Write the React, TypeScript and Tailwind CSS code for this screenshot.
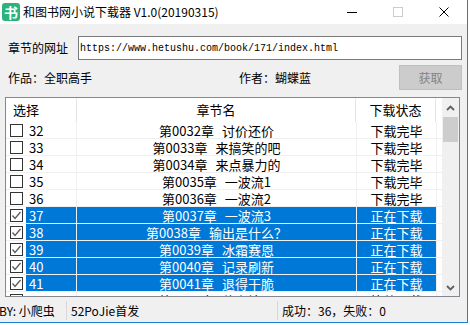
import React from 'react';

interface Chapter {
  no: number;
  title: string;
  status: string;
  checked: boolean;
}

const CHAPTERS: Chapter[] = [
  { no: 32, title: '第0032章 讨价还价', status: '下载完毕', checked: false },
  { no: 33, title: '第0033章 来搞笑的吧', status: '下载完毕', checked: false },
  { no: 34, title: '第0034章 来点暴力的', status: '下载完毕', checked: false },
  { no: 35, title: '第0035章 一波流1', status: '下载完毕', checked: false },
  { no: 36, title: '第0036章 一波流2', status: '下载完毕', checked: false },
  { no: 37, title: '第0037章 一波流3', status: '正在下载', checked: true },
  { no: 38, title: '第0038章 输出是什么？', status: '正在下载', checked: true },
  { no: 39, title: '第0039章 冰霜赛恩', status: '正在下载', checked: true },
  { no: 40, title: '第0040章 记录刷新', status: '正在下载', checked: true },
  { no: 41, title: '第0041章 退得干脆', status: '正在下载', checked: true },
  { no: 42, title: '第0042章 什么情况', status: '等待下载', checked: false },
];

const CJK = 'font-["Noto_Sans_CJK_SC",sans-serif]';

const CheckBox: React.FC<{ checked: boolean }> = ({ checked }) => (
  <div className="flex h-[13px] w-[13px] items-center justify-center border border-[#333333] bg-white">
    {checked && (
      <svg width="11" height="11" viewBox="0 0 11 11">
        <polyline points="1.5,5.5 4,8.5 9.5,2" fill="none" stroke="#5a5a5a" strokeWidth="1.3" />
      </svg>
    )}
  </div>
);

const Row: React.FC<{ item: Chapter }> = ({ item }) => {
  const sel = item.checked;
  const cell = sel ? 'bg-[#0078d7] text-white' : 'bg-white text-black';
  return (
    <div className="flex h-[17px] shrink-0 border-b border-[#f0f0f0] text-[13px] leading-none">
      <div className="flex w-[71px] border-r border-[#f0f0f0]">
        <div className="flex w-[20px] items-center pl-[4px]">
          <CheckBox checked={item.checked} />
        </div>
        <div className={`flex flex-1 items-center pl-[3px] ${cell}`}>{item.no}</div>
      </div>
      <div
        className={`flex w-[280px] items-center justify-center whitespace-pre border-r border-[#f0f0f0] [word-spacing:5px] ${cell}`}
      >
        {item.title}
      </div>
      <div className={`flex w-[80px] items-center justify-center border-r border-[#f0f0f0] ${cell}`}>
        {item.status}
      </div>
      <div className="flex-1 bg-white" />
    </div>
  );
};

const Chevron: React.FC<{ up?: boolean }> = ({ up }) => (
  <svg width="9" height="6" viewBox="0 0 9 6">
    <polyline
      points={up ? '1,5 4.5,1.5 8,5' : '1,1 4.5,4.5 8,1'}
      fill="none"
      stroke="#606060"
      strokeWidth="1.8"
    />
  </svg>
);

const App: React.FC = () => {
  return (
    <div className={`h-[325px] w-[470px] overflow-hidden bg-white text-[12px] text-black ${CJK}`}>
      <div className="flex h-[323px] w-[468px] flex-col border-b border-r border-[#1883d7] bg-[#f0f0f0]">
        {/* title bar */}
        <div className="flex h-[24px] shrink-0 items-center bg-white">
          <div className="ml-[2px] flex h-[18px] w-[18px] items-center justify-center rounded-[3px] bg-[#2cb27a] text-[14px] font-bold leading-none text-white">
            书
          </div>
          <span className="ml-[3px] leading-none">和图书网小说下载器 V1.0(20190315)</span>
          <div className="ml-auto flex h-full">
            <div className="flex w-[46px] items-center justify-center">
              <svg width="10" height="10" viewBox="0 0 10 10">
                <line x1="0" y1="5.5" x2="10" y2="5.5" stroke="#000" strokeWidth="1" />
              </svg>
            </div>
            <div className="flex w-[46px] items-center justify-center">
              <svg width="10" height="10" viewBox="0 0 10 10">
                <rect x="0.5" y="0.5" width="9" height="9" fill="none" stroke="#cccccc" strokeWidth="1" />
              </svg>
            </div>
            <div className="flex w-[46px] items-center justify-center">
              <svg width="10" height="10" viewBox="0 0 10 10">
                <path d="M0.5 0.5 L9.5 9.5 M9.5 0.5 L0.5 9.5" stroke="#000" strokeWidth="1" />
              </svg>
            </div>
          </div>
        </div>

        {/* url row */}
        <div className="mt-[12px] flex h-[24px] shrink-0 items-center">
          <span className="w-[78px] pl-[8px]">章节的网址</span>
          <div className="flex h-[24px] w-[384px] items-center border border-[#7a7a7a] bg-white pl-[1px] font-['Liberation_Mono',monospace] text-[10px]">
            https://www.hetushu.com/book/171/index.html
          </div>
        </div>

        {/* info row */}
        <div className="mt-[5px] flex h-[25px] shrink-0 items-center">
          <span className="w-[239px] pl-[8px]">作品：全职高手</span>
          <span>作者：蝴蝶蓝</span>
          <button className="ml-auto mr-[5px] flex h-[25px] w-[63px] items-center justify-center border border-[#bfbfbf] bg-[#cccccc] text-[#838383]">
            获取
          </button>
        </div>

        {/* list */}
        <div className="ml-[5px] mt-[7px] flex h-[200px] w-[455px] shrink-0 overflow-hidden border border-[#828790] bg-white">
          <div className="flex w-[436px] flex-col overflow-hidden">
            <div className="flex h-[24px] shrink-0 text-[13px]">
              <div className="flex w-[71px] items-center border-r border-[#e5e5e5] pl-[7px]">选择</div>
              <div className="flex w-[279px] items-center justify-center border-r border-[#e5e5e5]">章节名</div>
              <div className="flex w-[80px] items-center justify-center border-r border-[#e5e5e5]">下载状态</div>
            </div>
            {CHAPTERS.map((c) => (
              <Row key={c.no} item={c} />
            ))}
          </div>
          <div className="flex w-[17px] flex-col bg-[#f0f0f0]">
            <div className="flex h-[19px] items-center justify-center pt-[1px]">
              <Chevron up />
            </div>
            <div className="mx-[1px] h-[25px] bg-[#cdcdcd]" />
            <div className="flex-1" />
            <div className="flex h-[17px] items-center justify-center">
              <Chevron />
            </div>
          </div>
        </div>

        {/* status bar */}
        <div className="mt-[2px] flex h-[23px] shrink-0 items-center">
          <div className="flex h-[19px] w-[67px] items-center border-r border-[#d7d7d7]">
            <span className="-ml-[1px]">BY: 小爬虫</span>
          </div>
          <div className="flex h-[19px] w-[211px] items-center border-r border-[#d7d7d7] pl-[4px]">52PoJie首发</div>
          <div className="flex h-[19px] items-center pl-[4px]">成功：36，失败：0</div>
        </div>
      </div>
    </div>
  );
};

export default App;
